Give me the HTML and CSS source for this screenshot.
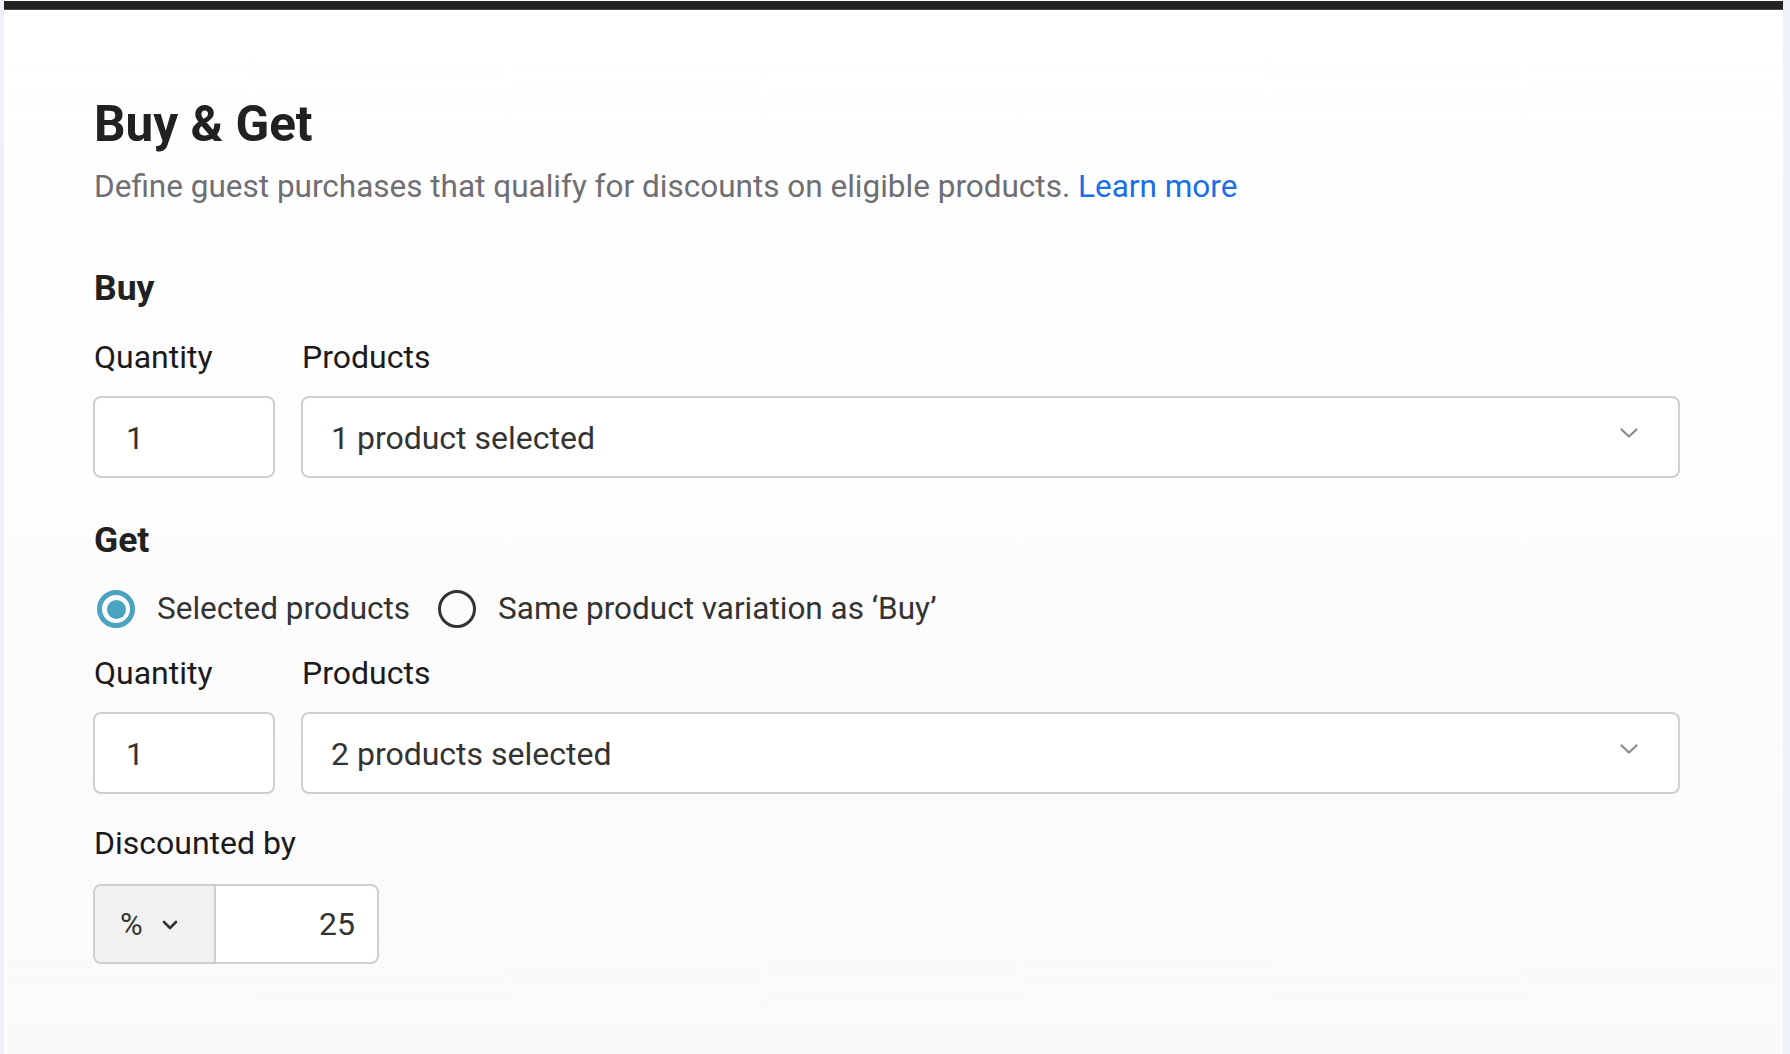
FILE: index.html
```html
<!DOCTYPE html>
<html lang="en">
<head>
<meta charset="utf-8">
<title>Buy &amp; Get</title>
<link rel="stylesheet" href="styles.css">
</head>
<body>
<div class="card">
  <div class="topbar"></div>
  <div class="content">
    <h1 class="title">Buy &amp; Get</h1>
    <p class="subtitle">Define guest purchases that qualify for discounts on eligible products. <a class="link" href="#">Learn more</a></p>

    <h2 class="section section-buy">Buy</h2>
    <div class="row">
      <div class="col col-qty">
        <div class="label">Quantity</div>
        <div class="input qty">1</div>
      </div>
      <div class="col col-products">
        <div class="label">Products</div>
        <div class="input select">
          <span>1 product selected</span>
          <svg class="chev" width="18" height="10" viewBox="0 0 18 10"><path d="M1.5 1.5 L9 8.5 L16.5 1.5" fill="none" stroke="#8a8a8a" stroke-width="2.2" stroke-linecap="round" stroke-linejoin="round"/></svg>
        </div>
      </div>
    </div>

    <h2 class="section section-get">Get</h2>
    <div class="radios">
      <label class="radio">
        <span class="dot checked"></span>
        <span class="radio-text">Selected products</span>
      </label>
      <label class="radio">
        <span class="dot"></span>
        <span class="radio-text">Same product variation as ‘Buy’</span>
      </label>
    </div>
    <div class="row row-get">
      <div class="col col-qty">
        <div class="label">Quantity</div>
        <div class="input qty">1</div>
      </div>
      <div class="col col-products">
        <div class="label">Products</div>
        <div class="input select">
          <span>2 products selected</span>
          <svg class="chev" width="18" height="10" viewBox="0 0 18 10"><path d="M1.5 1.5 L9 8.5 L16.5 1.5" fill="none" stroke="#8a8a8a" stroke-width="2.2" stroke-linecap="round" stroke-linejoin="round"/></svg>
        </div>
      </div>
    </div>

    <div class="label label-disc">Discounted by</div>
    <div class="discount">
      <div class="unit">
        <span class="pct">%</span>
        <svg class="chev-dark" width="16" height="10" viewBox="0 0 16 10"><path d="M2 2 L8 8 L14 2" fill="none" stroke="#333" stroke-width="2.6" stroke-linecap="round" stroke-linejoin="round"/></svg>
      </div>
      <div class="amount">25</div>
    </div>
  </div>
</div>
</body>
</html>
```

FILE: styles.css
```css
* { box-sizing: border-box; }
html, body { margin: 0; padding: 0; }
body {
  background: #eef1fa;
  font-family: Roboto, "Liberation Sans", Arial, sans-serif;
  color: #222;
}
.card {
  margin-left: 4px;
  width: 1779px;
  min-height: 1054px;
  background: linear-gradient(#ffffff, #fafafa);
  padding-top: 1px;
}
.topbar {
  height: 9px;
  background: #232326;
  border-bottom: 1px solid #4a4a4c;
}
.content {
  padding: 86px 0 0 89px;
}
.title {
  margin: 0 0 0 1px;
  font-size: 49.5px;
  line-height: 56px;
  font-weight: 700;
  color: #212121;
}
.subtitle {
  margin: 17px 0 0 1px;
  font-size: 31.5px;
  line-height: 36px;
  color: #6e6e74;
}
.link { color: #1a6ee6; text-decoration: none; }
.section {
  margin: 0 0 0 1px;
  font-size: 35.5px;
  line-height: 40px;
  font-weight: 700;
  color: #212121;
}
.section-buy { margin-top: 63px; }
.section-get { margin-top: 42px; }
.row {
  display: flex;
  gap: 26px;
  margin-top: 33px;
}
.row-get { margin-top: 28px; }
.col { display: flex; flex-direction: column; gap: 23px; }
.col-qty { width: 182px; }
.col-products { width: 1379px; }
.col .label { margin-left: 1px; }
.label {
  font-size: 32px;
  line-height: 32px;
  color: #1a1a1a;
}
.input {
  height: 82px;
  border: 2px solid #cfcfcf;
  border-radius: 8px;
  background: #fff;
  display: flex;
  align-items: center;
  padding: 2px 28px 0;
  font-size: 32px;
  color: #333;
}
.qty { padding-left: 31px; }
.select { justify-content: space-between; padding-right: 40px; }
.chev { margin-top: -10px; }
.radios {
  display: flex;
  align-items: center;
  gap: 28px;
  margin: 29px 0 0 4px;
  height: 40px;
}
.radio {
  display: flex;
  align-items: center;
  gap: 22px;
  font-size: 31.5px;
  line-height: 40px;
  color: #333;
}
.dot {
  width: 38px;
  height: 38px;
  border-radius: 50%;
  border: 3.5px solid #333;
  display: flex;
  align-items: center;
  justify-content: center;
}
.dot.checked { border: 5px solid #4aa3c0; }
.dot.checked::after {
  content: "";
  width: 19px;
  height: 19px;
  border-radius: 50%;
  background: #4aa3c0;
}
.label-disc { margin: 33px 0 0 1px; }
.discount {
  margin-top: 25px;
  display: flex;
  width: 286px;
  height: 80px;
  border: 2px solid #cfcfcf;
  border-radius: 8px;
  overflow: hidden;
  background: #fff;
}
.unit {
  width: 121px;
  background: #f1f1f1;
  border-right: 2px solid #cfcfcf;
  display: flex;
  align-items: center;
  padding-left: 25px;
  gap: 19px;
  font-size: 31px;
  color: #333;
}
.chev-dark { margin-top: 2px; }
.amount {
  flex: 1;
  display: flex;
  align-items: center;
  justify-content: flex-end;
  padding-right: 22px;
  font-size: 32px;
  color: #333;
}
```
